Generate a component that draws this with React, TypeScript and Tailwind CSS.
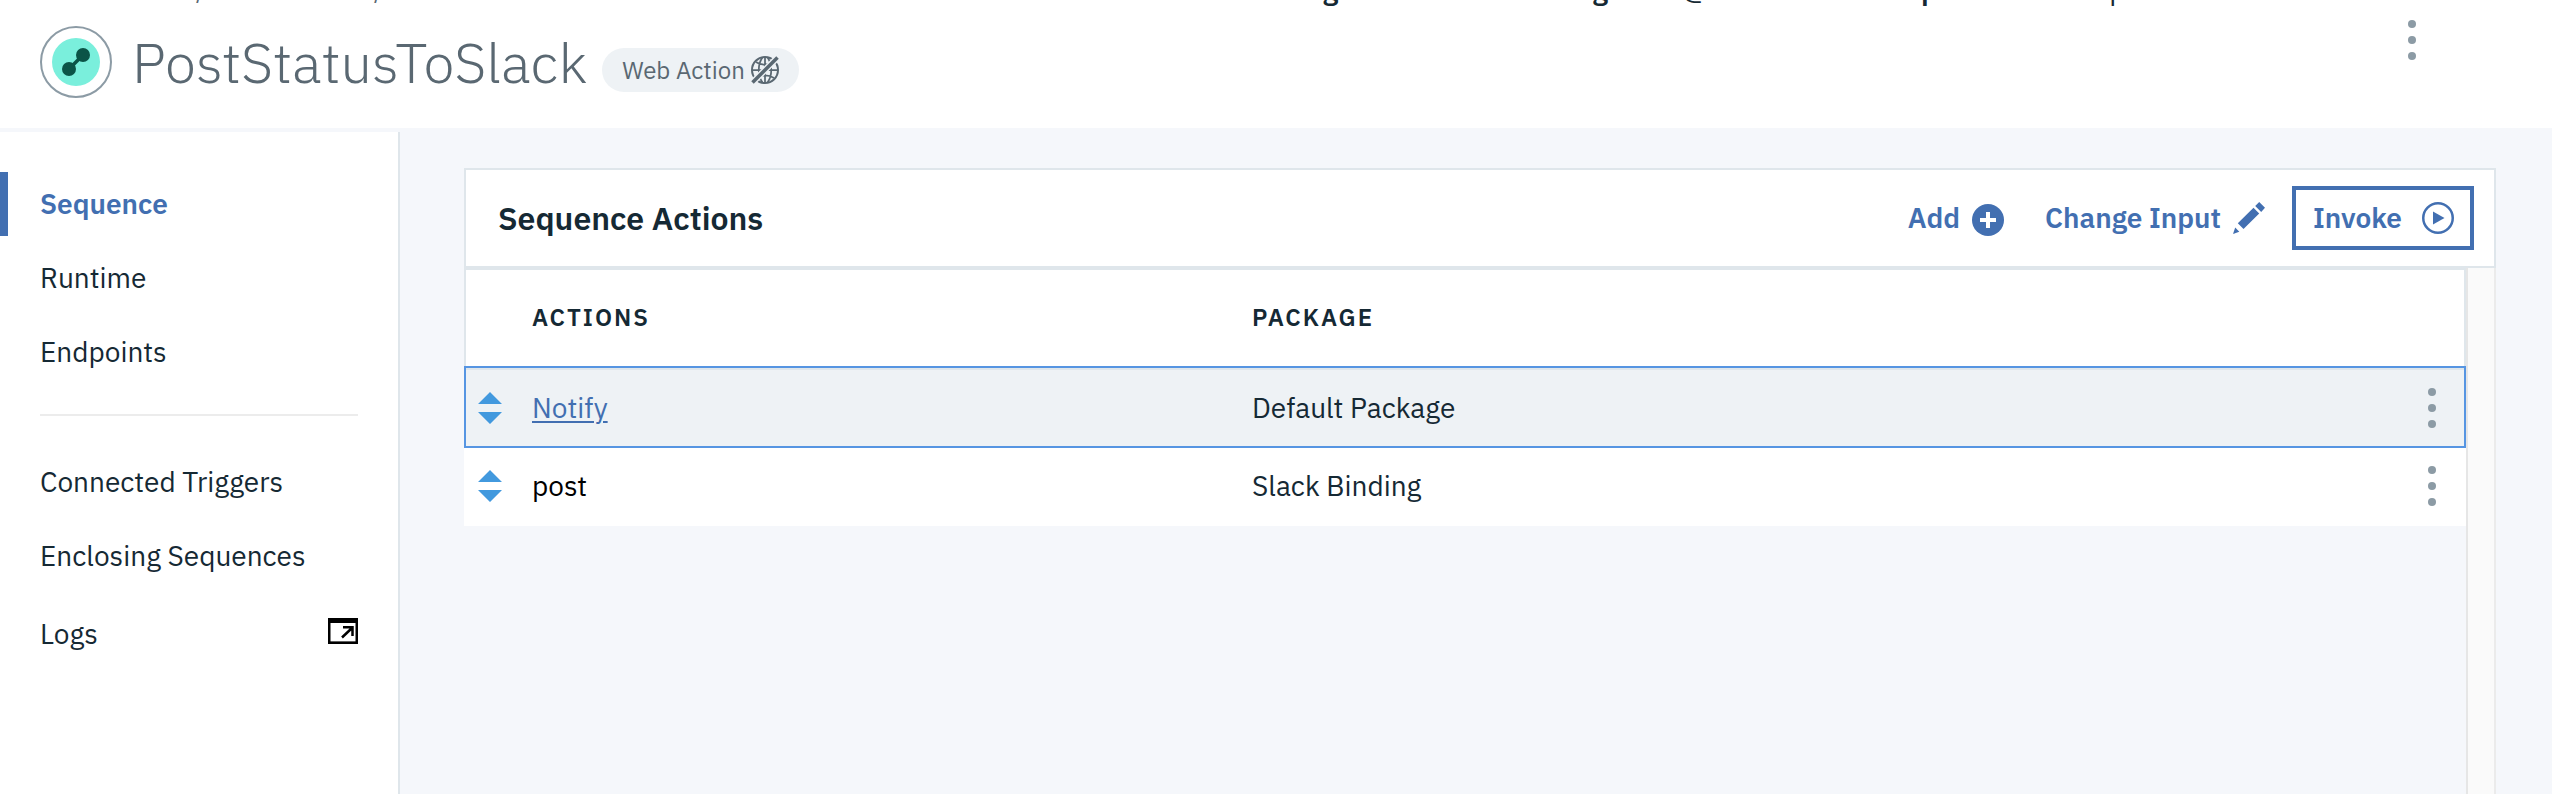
import React from "react";

const breadcrumb = ["Functions", "Actions"];

const context = [
  { label: "Region:", value: "US South", width: "w-[273px]" },
  { label: "Org:", value: "csan@us.ibm.com", width: "w-[342px]" },
  { label: "Space:", value: "cfmain-space cloud-dev", width: "w-[400px]" },
];

const primaryLinks = [
  { name: "Sequence", active: true },
  { name: "Runtime", active: false },
  { name: "Endpoints", active: false },
];

const rows = [
  { action: "Notify", pkg: "Default Package", selected: true },
  { action: "post", pkg: "Slack Binding", selected: false },
];

function Kebab() {
  return (
    <svg width="8" height="40" viewBox="0 0 8 40" fill="#8c9ba5" aria-hidden="true">
      <circle cx="4" cy="4" r="4" />
      <circle cx="4" cy="20" r="4" />
      <circle cx="4" cy="36" r="4" />
    </svg>
  );
}

function SequenceLogo() {
  return (
    <svg className="shrink-0" width="72" height="72" viewBox="0 0 72 72" aria-hidden="true">
      <circle cx="36" cy="36" r="35" fill="#fff" stroke="#8c9ba5" strokeWidth="2" />
      <circle cx="36" cy="36" r="24" fill="#7aefdc" />
      <path d="M29 43 43 29" stroke="#0b5447" strokeWidth="3.5" />
      <circle cx="29" cy="43" r="7" fill="#0b5447" />
      <circle cx="43" cy="29" r="7" fill="#0b5447" />
    </svg>
  );
}

function GlobeOff() {
  return (
    <svg width="28" height="28" viewBox="0 0 28 28" fill="none" stroke="#5a6872" strokeWidth="2" aria-hidden="true">
      <circle cx="14" cy="14" r="13" />
      <path d="M14 1v26M1 14h26M5 6c5 3.5 13 3.5 18 0M5 22c5-3.5 13-3.5 18 0M11.5 1.5C6.5 8 6.5 20 11.5 26.5M16.5 1.5c5 6.5 5 18.5 0 25" strokeWidth="1.75" />
      <path d="M3 25 25 3" stroke="#eef2f5" strokeWidth="6.5" />
      <path d="M1.5 26.5 26.5 1.5" stroke="#5a6872" strokeWidth="3.5" />
    </svg>
  );
}

function LaunchIcon() {
  return (
    <svg className="mb-[6px]" width="30" height="26" viewBox="0 0 30 26" fill="none" stroke="#000" aria-hidden="true">
      <path d="M1.25 1v24h27.5V1" strokeWidth="2.5" />
      <path d="M0 24.75h30" strokeWidth="2.5" />
      <path d="M0 2.5h30" strokeWidth="5" />
      <path d="M14 19.5 24 10M15 9.25h9.5V18" strokeWidth="2.5" />
    </svg>
  );
}

function SortArrows() {
  return (
    <svg width="24" height="32" viewBox="0 0 24 32" fill="#4299de" aria-hidden="true">
      <path d="M12 0 24 12H0zM0 20h24L12 32z" />
    </svg>
  );
}

function AddIcon() {
  return (
    <svg className="mt-1" width="32" height="32" viewBox="0 0 32 32" aria-hidden="true">
      <circle cx="16" cy="16" r="16" fill="#426fb1" />
      <path d="M16 8v16M8 16h16" stroke="#fff" strokeWidth="4" />
    </svg>
  );
}

function PencilIcon() {
  return (
    <svg width="32" height="32" viewBox="0 0 32 32" fill="#426fb1" aria-hidden="true">
      <path d="M26.2 0 32 5.8 28.2 10 22.2 4zM20.5 5.8 26.2 11.5 10.5 27 4.8 21.3zM2.2 25.5 6.3 29.8 0 32z" />
    </svg>
  );
}

function PlayIcon() {
  return (
    <svg width="32" height="32" viewBox="0 0 32 32" aria-hidden="true">
      <circle cx="16" cy="16" r="14.75" fill="none" stroke="#426fb1" strokeWidth="2.5" />
      <path d="M11 9.5 22.5 16 11 22.5z" fill="#426fb1" />
    </svg>
  );
}

export default function App() {
  return (
    <div className="flex h-screen flex-col overflow-hidden bg-[#f5f7fb] font-['IBM_Plex_Sans','Noto_Sans',sans-serif] text-[28px] leading-9 text-[#152934]">
      <header className="h-32 shrink-0 overflow-hidden bg-white pl-10">
        <div className="-mt-7 flex h-9 items-center justify-between">
          <nav aria-label="Breadcrumb" className="flex text-2xl leading-9 text-[#5a6872]">
            {breadcrumb.map((item) => (
              <React.Fragment key={item}>
                <a href="#" className="w-[156px]">{item}</a>
                <span className="w-[22px]">/</span>
              </React.Fragment>
            ))}
          </nav>
          <div className="mr-[248px] flex">
            {context.map((entry) => (
              <p key={entry.label} className={`${entry.width} whitespace-nowrap`}>
                <span className="font-semibold">{entry.label}</span> {entry.value}
              </p>
            ))}
          </div>
        </div>
        <div className="flex items-start justify-between pr-[136px]">
          <div className="flex items-center pt-[18px]">
            <SequenceLogo />
            <h1 className="ml-5 text-[56px] leading-[72px] font-light text-[#5a6872]">PostStatusToSlack</h1>
            <span className="mt-4 ml-[15px] flex h-11 items-center gap-[6px] rounded-full bg-[#eef2f5] px-5 text-2xl text-[#5a6872]">
              Web Action
              <GlobeOff />
            </span>
          </div>
          <button type="button" aria-label="Sequence options" className="mt-3">
            <Kebab />
          </button>
        </div>
      </header>

      <div className="flex min-h-0 flex-1">
        <aside className="mt-1 w-[400px] shrink-0 border-r-2 border-[#dfe6eb] bg-white pt-10">
          <nav aria-label="Sequence sections">
            <ul className="flex flex-col gap-[10px]">
              {primaryLinks.map((link) => (
                <li key={link.name}>
                  <a
                    href="#"
                    className={
                      link.active
                        ? "flex h-16 items-center border-l-8 border-[#426fb1] pl-8 font-semibold text-[#426fb1]"
                        : "flex h-16 items-center pl-10"
                    }
                  >
                    {link.name}
                  </a>
                </li>
              ))}
            </ul>
            <hr className="mr-10 ml-10 mt-[30px] border-t-2 border-[#ececec]" />
            <ul className="mt-[34px] flex flex-col gap-[10px] pr-10 pl-10">
              <li><a href="#" className="flex h-16 items-center">Connected Triggers</a></li>
              <li><a href="#" className="flex h-16 items-center">Enclosing Sequences</a></li>
              <li>
                <a href="#" className="flex h-[72px] items-center justify-between">
                  Logs
                  <LaunchIcon />
                </a>
              </li>
            </ul>
          </nav>
        </aside>

        <main className="flex min-w-0 flex-1 flex-col pt-10 pr-14 pl-16">
          <div className="flex h-[100px] shrink-0 items-center justify-between border-2 border-[#dfe6eb] bg-white pr-5 pl-8">
            <h2 className="text-[32px] leading-10 font-semibold">Sequence Actions</h2>
            <div className="flex items-center font-semibold text-[#426fb1]">
              <button type="button" className="flex items-center gap-3">
                Add
                <AddIcon />
              </button>
              <button type="button" className="ml-[41px] flex items-center gap-3">
                Change Input
                <PencilIcon />
              </button>
              <button type="button" className="ml-[27px] flex h-16 items-center gap-5 border-4 border-[#426fb1] pr-4 pl-[17px]">
                Invoke
                <PlayIcon />
              </button>
            </div>
          </div>

          <div className="flex min-h-0 flex-1">
            <div className="min-w-0 flex-1">
              <table className="w-full table-fixed border-separate border-spacing-0 text-left">
                <colgroup>
                  <col className="w-[68px]" />
                  <col className="w-[720px]" />
                  <col />
                  <col className="w-[70px]" />
                </colgroup>
                <thead>
                  <tr className="h-[98px] bg-white text-2xl tracking-[2px]">
                    <th className="border-t-2 border-l-2 border-[#dfe6eb]" aria-label="Order" />
                    <th className="border-t-2 border-[#dfe6eb] pb-0.5 font-semibold">ACTIONS</th>
                    <th className="border-t-2 border-[#dfe6eb] pb-0.5 font-semibold">PACKAGE</th>
                    <th className="border-t-2 border-r-2 border-[#dfe6eb]" aria-label="Options" />
                  </tr>
                </thead>
                <tbody>
                  {rows.map((row) => {
                    const cell = row.selected
                      ? "h-[82px] border-y-2 border-[#5695e2] bg-[#eef2f5] pt-0.5 shadow-[inset_0_2px_0_#dfe6eb]"
                      : "h-[78px] border-transparent bg-white pb-0.5";
                    return (
                      <tr key={row.action}>
                        <td className={`${cell} border-l-2 pl-3`}>
                          <button type="button" aria-label={`Reorder ${row.action}`} className="block">
                            <SortArrows />
                          </button>
                        </td>
                        <td className={cell}>
                          {row.selected ? (
                            <a href="#" className="text-[#426fb1] underline decoration-2 underline-offset-3">{row.action}</a>
                          ) : (
                            <span className="text-black">{row.action}</span>
                          )}
                        </td>
                        <td className={cell}>{row.pkg}</td>
                        <td className={`${cell} border-r-2 pl-8`}>
                          <button type="button" aria-label={`Options for ${row.action}`} className="block">
                            <Kebab />
                          </button>
                        </td>
                      </tr>
                    );
                  })}
                </tbody>
              </table>
            </div>
            <div className="w-[30px] shrink-0 border-x-2 border-l-[#e6e6e6] border-r-[#ebebeb] bg-[#fafafa]" />
          </div>
        </main>
      </div>
    </div>
  );
}
